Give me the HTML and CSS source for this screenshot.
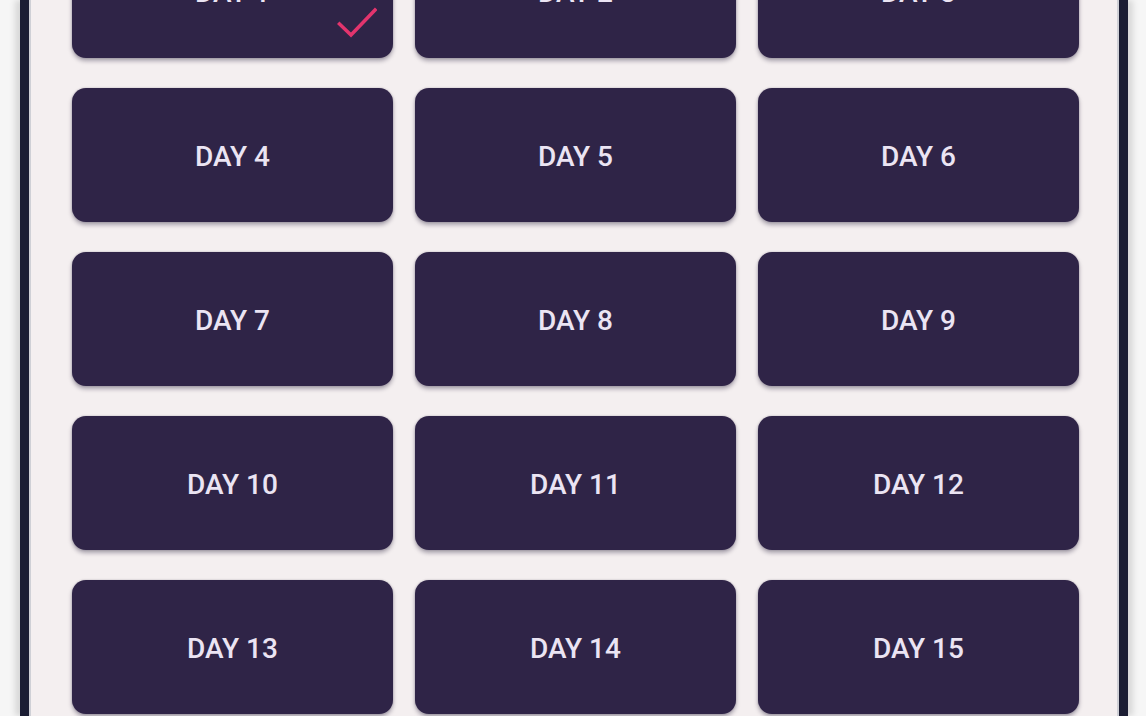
FILE: index.html
```html
<!DOCTYPE html>
<html lang="en">
<head>
<meta charset="utf-8">
<title>Days</title>
<link rel="stylesheet" href="styles.css">
</head>
<body>
<div class="stage">
  <div class="device">
    <div class="screen">
      <div class="grid">
        <button class="day">DAY 1
          <svg class="check" viewBox="0 0 40 31" aria-hidden="true"><polyline points="2.5,17 14,28 38,3" /></svg>
        </button>
        <button class="day">DAY 2</button>
        <button class="day">DAY 3</button>
        <button class="day">DAY 4</button>
        <button class="day">DAY 5</button>
        <button class="day">DAY 6</button>
        <button class="day">DAY 7</button>
        <button class="day">DAY 8</button>
        <button class="day">DAY 9</button>
        <button class="day">DAY 10</button>
        <button class="day">DAY 11</button>
        <button class="day">DAY 12</button>
        <button class="day">DAY 13</button>
        <button class="day">DAY 14</button>
        <button class="day">DAY 15</button>
      </div>
    </div>
  </div>
</div>
</body>
</html>
```

FILE: styles.css
```css
html, body {
  margin: 0;
  padding: 0;
  height: 100%;
  overflow: hidden;
  background: #f6f6f6;
}

.stage {
  height: 716px;
  padding: 0 18px 0 20px;
  box-sizing: border-box;
}

.device {
  height: 100%;
  background: #1b1d33;
  padding: 0 9px;
  box-shadow: -5px 0 6px rgba(0, 0, 0, 0.12), 5px 0 6px rgba(0, 0, 0, 0.12);
}

.screen {
  height: 100%;
  background: #f4eff0;
  border-left: 2px solid #cfd0d6;
  border-right: 2px solid #cfd0d6;
  overflow: hidden;
}

.grid {
  display: grid;
  grid-template-columns: repeat(3, 321px);
  grid-auto-rows: 134px;
  column-gap: 22px;
  row-gap: 30px;
  padding: 0 0 0 41px;
  margin-top: -76px;
}

.day {
  position: relative;
  border: none;
  border-radius: 14px;
  background: #2f2447;
  color: #ebe4f3;
  font-family: Roboto, "Noto Sans", sans-serif;
  font-weight: 500;
  font-size: 28px;
  letter-spacing: 0;
  padding: 3px 0 0;
  box-shadow: 0 3px 4px rgba(30, 20, 50, 0.35), 0 0 2px rgba(30, 20, 50, 0.25);
}

.check {
  position: absolute;
  right: 16px;
  bottom: 20px;
  width: 40px;
  height: 31px;
}

.check polyline {
  fill: none;
  stroke: #e3346d;
  stroke-width: 3.5;
  stroke-linecap: square;
}
```
